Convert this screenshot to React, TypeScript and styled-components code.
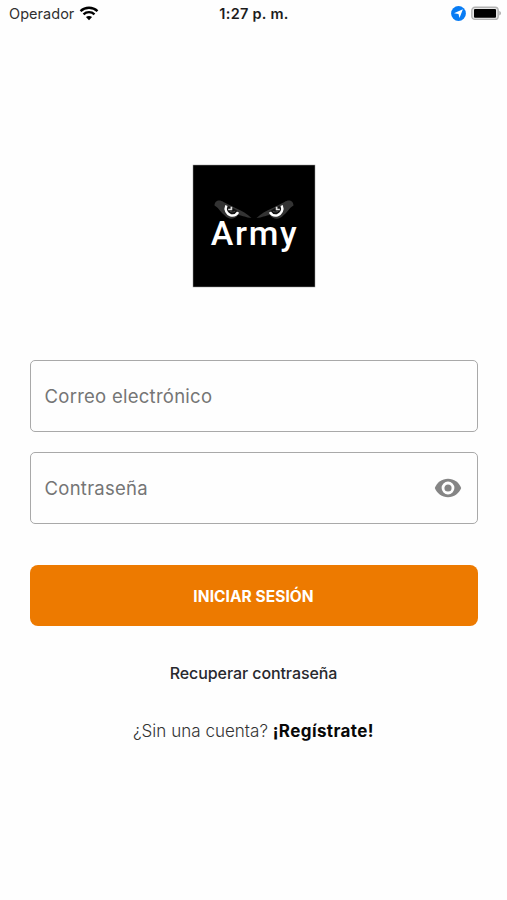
import React from "react";
import styled, { createGlobalStyle } from "styled-components";

const GlobalStyle = createGlobalStyle`
  * { box-sizing: border-box; }
  body { margin: 0; background: #fff; font-family: Inter, "Liberation Sans", sans-serif; }
`;

const Screen = styled.main`
  width: 507px;
  height: 900px;
  display: flex;
  flex-direction: column;
  align-items: center;
  background: #fefefe;
  overflow: hidden;
`;

const StatusBar = styled.header`
  width: 100%;
  height: 27px;
  padding: 0 5px 0 9px;
  display: grid;
  grid-template-columns: 1fr auto 1fr;
  align-items: center;
  flex: none;
`;

const StatusGroup = styled.div<{ $end?: boolean }>`
  display: flex;
  align-items: center;
  gap: 5px;
  justify-content: ${(p) => (p.$end ? "flex-end" : "flex-start")};
`;

const Carrier = styled.span`
  font-size: 14.5px;
  line-height: 20px;
  padding-top: 1px;
  letter-spacing: 0.04px;
  color: #303030;
`;

const Clock = styled.time`
  font-size: 14.5px;
  line-height: 20px;
  padding: 1px 3px 0 0;
  font-weight: 600;
  color: #1c1c1c;
  letter-spacing: 0.28px;
`;

const Logo = styled.svg`
  display: block;
  width: 124px;
  height: 124px;
  margin-top: 137px;
  flex: none;
`;

const LogoText = styled.text`
  font-family: Roboto, sans-serif;
  font-size: 34px;
  font-weight: 500;
  letter-spacing: 1.7px;
  fill: #fff;
`;

const Form = styled.form`
  width: 448px;
  margin-top: 72px;
  display: flex;
  flex-direction: column;
`;

const Field = styled.label`
  height: 72px;
  margin-bottom: 20px;
  padding: 0 15px 0 14px;
  display: flex;
  align-items: center;
  border: 1px solid #a9a9a9;
  border-radius: 5px;
`;

const Input = styled.input`
  flex: 1;
  min-width: 0;
  padding: 0 0 1px;
  border: 0;
  outline: 0;
  background: transparent;
  font: 400 18.5px/24px Inter, sans-serif;
  letter-spacing: 0.26px;
  color: #333;
  &::placeholder { color: #757575; opacity: 1; }
`;

const IconButton = styled.button`
  padding: 0;
  border: 0;
  background: none;
  display: flex;
`;

const Submit = styled.button`
  height: 61px;
  margin-top: 21px;
  padding: 2px 0 0;
  border: 0;
  border-radius: 8px;
  background: #ed7a00;
  color: #fff;
  font: 700 15.5px/20px Inter, sans-serif;
  letter-spacing: 0.05px;
`;

const Recover = styled.a`
  margin-top: 37px;
  font-size: 16px;
  line-height: 20px;
  font-weight: 500;
  letter-spacing: -0.08px;
  color: #28292e;
`;

const Register = styled.p`
  margin: 38px 0 0;
  font-size: 17px;
  line-height: 20px;
  font-weight: 300;
  letter-spacing: 0.02px;
  color: #333;
  white-space: nowrap;
`;

const RegisterLink = styled.a`
  font-weight: 700;
  letter-spacing: 0.4px;
  color: #080808;
`;

const WifiIcon = () => (
  <svg width="20" height="15" viewBox="0 0 20 15" fill="none" stroke="#000">
    <path d="M1.5 5.1C6.3.7 13.7.7 18.5 5.1" strokeWidth="2.4" />
    <path d="M4.5 8.3c3.1-2.9 7.9-2.9 11 0" strokeWidth="2.3" />
    <path d="M10 14.2 6.9 11.1c1.7-1.6 4.5-1.6 6.2 0Z" fill="#000" stroke="none" />
  </svg>
);

const LocationIcon = () => (
  <svg width="15" height="15" viewBox="0 0 15 15">
    <circle cx="7.5" cy="7.5" r="7.4" fill="#087cf4" />
    <path d="M11.9 3.2 8.5 12 7.5 8 3 7.2Z" fill="#fff" />
  </svg>
);

const BatteryIcon = () => (
  <svg width="31" height="15" viewBox="0 0 31 15">
    <rect x=".8" y="1.2" width="26.4" height="12.2" rx="3.2" fill="#e7e7e7" stroke="#b2b2b2" strokeWidth="1.4" />
    <rect x="3" y="3" width="22" height="8.8" rx="1" fill="#000" />
    <path d="M28.3 5.1c2.2.7 2.2 3.7 0 4.4Z" fill="#aaa" />
  </svg>
);

const EyeIcon = () => (
  <svg width="28" height="20" viewBox="0 0 28 20">
    <path d="M14 .8C8 .8 3 4.5.8 10 3 15.5 8 19.2 14 19.2S25 15.5 27.2 10C25 4.5 20 .8 14 .8Z" fill="#858585" />
    <circle cx="14" cy="10" r="5" fill="#858585" stroke="#fefefe" strokeWidth="2.8" />
  </svg>
);

const EyeShape = () => (
  <>
    <path d="M22.5 41.5c0-5 5-6.5 9-3.5l13 6.5c6 2.5 10 5 15 9.5-6-.5-8-2.2-13.5-3-3 5-10 4.5-13 .8-2-1.5-3-3-5-5-1-2-3-3.5-5.5-5.3Z" fill="#333" />
    <path d="M33 41.5c3 .5 10 3 13.5 6.5-1 3.5-4 5-7 4.3-4-1-7-5.8-6.5-10.8Z" fill="#111" />
    <path d="M34.4 41.4c-2 4.5.4 8.6 4.1 9.8 3 .8 6-.3 7.6-3" fill="none" stroke="#fff" strokeWidth="2.5" />
    <path d="M36.2 45.5h3.2v-2.7" fill="none" stroke="#ddd" strokeWidth="1.7" />
    <path d="M37.7 47c1.5 1.3 4 1.4 5.5 0" fill="none" stroke="#444" strokeWidth="1" />
  </>
);

export default function App() {
  return (
    <>
      <GlobalStyle />
      <Screen>
        <StatusBar>
          <StatusGroup><Carrier>Operador</Carrier><WifiIcon /></StatusGroup>
          <Clock>1:27 p. m.</Clock>
          <StatusGroup $end><LocationIcon /><BatteryIcon /></StatusGroup>
        </StatusBar>
        <Logo viewBox="0 0 124 124" role="img" aria-label="Army">
          <rect x="1" y="1" width="122" height="122" fill="#000" stroke="#999" strokeWidth=".5" />
          <EyeShape />
          <g transform="translate(124 0) scale(-1 1)"><EyeShape /></g>
          <LogoText x="18.7" y="81">Army</LogoText>
        </Logo>
        <Form onSubmit={(e) => e.preventDefault()}>
          <Field><Input type="email" placeholder="Correo electrónico" /></Field>
          <Field>
            <Input type="password" placeholder="Contraseña" />
            <IconButton type="button" aria-label="Mostrar contraseña"><EyeIcon /></IconButton>
          </Field>
          <Submit>INICIAR SESIÓN</Submit>
        </Form>
        <Recover>Recuperar contraseña</Recover>
        <Register>¿Sin una cuenta? <RegisterLink>¡Regístrate!</RegisterLink></Register>
      </Screen>
    </>
  );
}
